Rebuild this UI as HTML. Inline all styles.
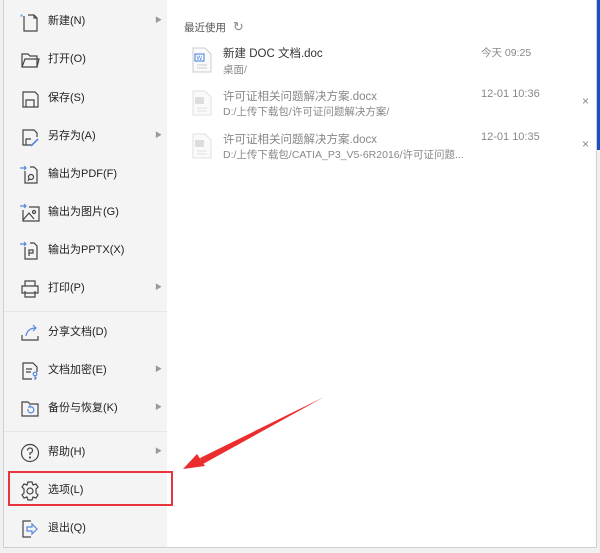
<!DOCTYPE html>
<html><head><meta charset="utf-8"><style>
*{margin:0;padding:0;box-sizing:border-box}
body{width:600px;height:553px;overflow:hidden;background:#f0f0f0;position:relative;font-family:"Liberation Sans","Noto Sans CJK SC",sans-serif}
.panel{position:absolute;left:3px;top:0;width:594px;height:548px;background:#fff;border:1px solid #d0d0d0;border-top:none}
.menu{position:absolute;left:0;top:0;width:163px;height:547px;background:#f4f4f4}
.it{position:absolute;left:0;width:163px;height:38px;font-size:11px;color:#222;line-height:38px}
.it .t{position:absolute;left:44px;top:0}
.it .a{position:absolute;left:151px;top:0;font-size:7px;color:#999}
.it svg{position:absolute;left:15px;top:9px}
.sep{position:absolute;left:0;width:163px;height:1px;background:#e6e6e6}
.r{position:absolute;font-size:11px;color:#333}
.g{color:#888}
</style></head><body>
<div style="position:absolute;left:597px;top:0;width:3px;height:150px;background:#1a4fc4"></div>
<div class="panel">
<div class="menu">
<div class="it" style="top:2px"><svg width="22" height="22" viewBox="0 0 22 22" fill="none" stroke="#444" stroke-width="1.2"><path d="M5 5V20H18V7L15 4H9"/><path d="M15 4V7H18"/><text x="1" y="9" font-size="8" fill="#39f" stroke="none">*</text></svg><span class="t">新建(N)</span><span class="a">▶</span></div>
<div class="it" style="top:40px"><svg width="22" height="22" viewBox="0 0 22 22" fill="none" stroke="#444" stroke-width="1.2"><path d="M3 5H9L11 7H18V18H3Z"/><path d="M3 18L6 10H20L18 18"/></svg><span class="t">打开(O)</span></div>
<div class="it" style="top:79px"><svg width="22" height="22" viewBox="0 0 22 22" fill="none" stroke="#444" stroke-width="1.2"><path d="M4 4H16L19 7V19H4Z"/><path d="M7 19V12H15V19"/></svg><span class="t">保存(S)</span></div>
<div class="it" style="top:117px"><svg width="22" height="22" viewBox="0 0 22 22" fill="none" stroke="#444" stroke-width="1.2"><path d="M13 19H4V4H15L18 7V11"/><path d="M7 19V13H12"/><path d="M12 20L19 13" stroke="#5588dd" stroke-width="1.6"/></svg><span class="t">另存为(A)</span><span class="a">▶</span></div>
<div class="it" style="top:155px"><svg width="22" height="22" viewBox="0 0 22 22" fill="none" stroke="#444" stroke-width="1.2"><path d="M6 7V19H18V6L15 3H11"/><path d="M1 4H7M5 2L7 4L5 6" stroke="#5588dd"/><circle cx="12" cy="13" r="2.5"/><path d="M10 15L9 17"/></svg><span class="t">输出为PDF(F)</span></div>
<div class="it" style="top:193px"><svg width="22" height="22" viewBox="0 0 22 22" fill="none" stroke="#444" stroke-width="1.2"><path d="M4 8V19H20V5H10"/><path d="M1 4H7M5 2L7 4L5 6" stroke="#5588dd"/><path d="M4 18L10 11L15 17"/><circle cx="15" cy="10" r="1.5"/></svg><span class="t">输出为图片(G)</span></div>
<div class="it" style="top:231px"><svg width="22" height="22" viewBox="0 0 22 22" fill="none" stroke="#444" stroke-width="1.2"><path d="M6 7V19H18V6L15 3H11"/><path d="M1 4H7M5 2L7 4L5 6" stroke="#5588dd"/><path d="M10 16V10H14V13H10"/></svg><span class="t">输出为PPTX(X)</span></div>
<div class="it" style="top:269px"><svg width="22" height="22" viewBox="0 0 22 22" fill="none" stroke="#444" stroke-width="1.2"><path d="M6 8V3H16V8"/><path d="M3 8H19V15H3Z"/><path d="M6 13V19H16V13"/></svg><span class="t">打印(P)</span><span class="a">▶</span></div>
<div class="sep" style="top:311px"></div>
<div class="it" style="top:313px"><svg width="22" height="22" viewBox="0 0 22 22" fill="none" stroke="#444" stroke-width="1.2"><path d="M3 13V18H19V14"/><path d="M7 14C8 8 12 6 17 6M14 3L17 6L14 9" stroke="#5588dd"/></svg><span class="t">分享文档(D)</span></div>
<div class="it" style="top:351px"><svg width="22" height="22" viewBox="0 0 22 22" fill="none" stroke="#444" stroke-width="1.2"><path d="M13 19H4V3H14L18 7V12"/><path d="M7 9H13M7 12H12"/><circle cx="16" cy="14" r="1.8" stroke="#5588dd"/><path d="M16 16V20M16 18H18" stroke="#5588dd"/></svg><span class="t">文档加密(E)</span><span class="a">▶</span></div>
<div class="it" style="top:389px"><svg width="22" height="22" viewBox="0 0 22 22" fill="none" stroke="#444" stroke-width="1.2"><path d="M3 4H9L11 6H19V18H3Z"/><path d="M9 11A3 3 0 1 0 11 9" stroke="#5588dd"/><path d="M11 7V9H9" stroke="#5588dd"/></svg><span class="t">备份与恢复(K)</span><span class="a">▶</span></div>
<div class="sep" style="top:431px"></div>
<div class="it" style="top:433px"><svg width="22" height="22" viewBox="0 0 22 22" fill="none" stroke="#444" stroke-width="1.2"><circle cx="11" cy="11" r="8.5"/><path d="M8.5 8.5A2.5 2.5 0 1 1 11 11V13"/><circle cx="11" cy="15.5" r=".5"/></svg><span class="t">帮助(H)</span><span class="a">▶</span></div>
<div class="it" style="top:471px"><svg width="22" height="22" viewBox="0 0 22 22" fill="none" stroke="#444" stroke-width="1.2"><path d="M9 2H13L14 5L17 4L19 7L17 9V13L19 15L17 18L14 17L13 20H9L8 17L5 18L3 15L5 13V9L3 7L5 4L8 5Z"/><circle cx="11" cy="11" r="3"/></svg><span class="t">选项(L)</span></div>
<div class="it" style="top:509px"><svg width="22" height="22" viewBox="0 0 22 22" fill="none" stroke="#444" stroke-width="1.2"><path d="M12 3H4V19H12"/><path d="M8 9H13V6L18 11L13 16V13H8Z" stroke="#5588dd"/></svg><span class="t">退出(Q)</span></div>
</div>
<div class="r" style="left:180px;top:19px;font-size:10.5px;color:#555">最近使用 <span style="font-size:13px;color:#888;margin-left:4px">↻</span></div>
<svg style="position:absolute;left:188px;top:47px" width="20" height="26" viewBox="0 0 20 26"><path d="M1 1H13L19 7V25H1Z" fill="#fafafa" stroke="#ccc"/><rect x="3" y="7" width="9" height="7" fill="#fff" stroke="#3b7ad9"/><text x="4.5" y="13" font-size="6" fill="#3b7ad9">W</text><path d="M5 18H15M5 21H15" stroke="#ccc"/></svg>
<svg style="position:absolute;left:188px;top:90px" width="20" height="26" viewBox="0 0 20 26"><path d="M1 1H13L19 7V25H1Z" fill="#fafafa" stroke="#e0e0e0"/><rect x="3" y="7" width="9" height="7" fill="#ddd"/><path d="M5 18H15M5 21H15" stroke="#e0e0e0"/></svg>
<svg style="position:absolute;left:188px;top:133px" width="20" height="26" viewBox="0 0 20 26"><path d="M1 1H13L19 7V25H1Z" fill="#fafafa" stroke="#e0e0e0"/><rect x="3" y="7" width="9" height="7" fill="#ddd"/><path d="M5 18H15M5 21H15" stroke="#e0e0e0"/></svg>
<div class="r" style="left:219px;top:45px;font-size:11.5px">新建 DOC 文档.doc</div>
<div class="r g" style="left:219px;top:62px;font-size:10.5px">桌面/</div>
<div class="r g" style="left:477px;top:45px;font-size:10.5px">今天 09:25</div>
<div class="r g" style="left:219px;top:88px;font-size:11.5px">许可证相关问题解决方案.docx</div>
<div class="r g" style="left:219px;top:104px;font-size:10.5px">D:/上传下载包/许可证问题解决方案/</div>
<div class="r g" style="left:477px;top:88px;font-size:11px">12-01 10:36</div>
<div class="r g" style="left:578px;top:94px;font-size:12px">×</div>
<div class="r g" style="left:219px;top:131px;font-size:11.5px">许可证相关问题解决方案.docx</div>
<div class="r g" style="left:219px;top:147px;font-size:10.5px">D:/上传下载包/CATIA_P3_V5-6R2016/许可证问题...</div>
<div class="r g" style="left:477px;top:131px;font-size:11px">12-01 10:35</div>
<div class="r g" style="left:578px;top:137px;font-size:12px">×</div>
</div>
<div style="position:absolute;left:8px;top:471px;width:165px;height:35px;border:2px solid #e8343a"></div>
<svg style="position:absolute;left:0;top:0" width="600" height="553"><polygon points="324,397 200,458 203,464" fill="#ec2d2d"/><polygon points="183,469 197,454 205,466" fill="#ec2d2d"/></svg>
</body></html>
